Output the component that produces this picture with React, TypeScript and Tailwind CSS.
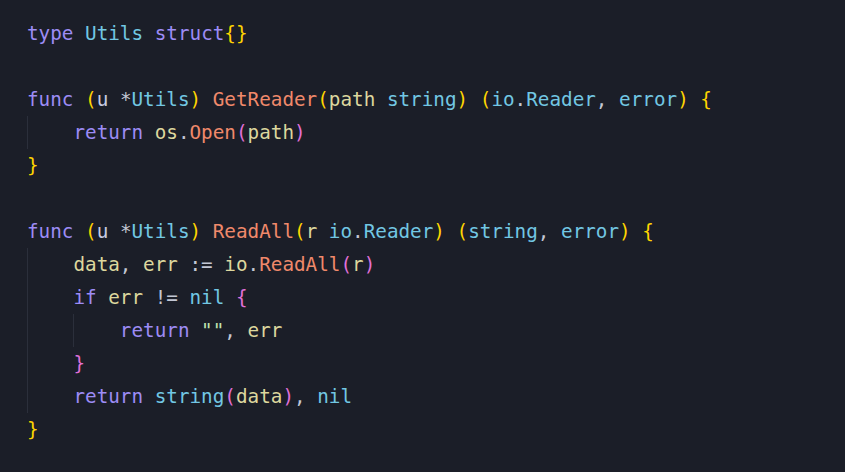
type Tok = [string, string];

const K = 'text-[#9d8cf5]'; // keyword
const T = 'text-[#72c7e3]'; // type / builtin
const F = 'text-[#f0896b]'; // function name
const V = 'text-[#ddd79e]'; // variable
const P = 'text-[#c3c7d4]'; // punctuation
const B1 = 'text-[#ffd500]'; // bracket level 1
const B2 = 'text-[#e070d8]'; // bracket level 2
const S = 'text-[#bfe3b0]'; // string
const R = 'text-[#c8cde3]'; // receiver

const lines: { indent: number; toks: Tok[] }[] = [
  { indent: 0, toks: [['type', K], [' ', P], ['Utils', T], [' ', P], ['struct', K], ['{}', B1]] },
  { indent: 0, toks: [] },
  {
    indent: 0,
    toks: [
      ['func', K], [' ', P], ['(', B1], ['u', R], [' ', P], ['*', P], ['Utils', T], [')', B1], [' ', P],
      ['GetReader', F], ['(', B1], ['path', V], [' ', P], ['string', T], [')', B1], [' ', P],
      ['(', B1], ['io', T], ['.', P], ['Reader', T], [',', P], [' ', P], ['error', T], [')', B1], [' ', P], ['{', B1],
    ],
  },
  { indent: 1, toks: [['return', K], [' ', P], ['os', V], ['.', P], ['Open', F], ['(', B2], ['path', V], [')', B2]] },
  { indent: 0, toks: [['}', B1]] },
  { indent: 0, toks: [] },
  {
    indent: 0,
    toks: [
      ['func', K], [' ', P], ['(', B1], ['u', R], [' ', P], ['*', P], ['Utils', T], [')', B1], [' ', P],
      ['ReadAll', F], ['(', B1], ['r', V], [' ', P], ['io', T], ['.', P], ['Reader', T], [')', B1], [' ', P],
      ['(', B1], ['string', T], [',', P], [' ', P], ['error', T], [')', B1], [' ', P], ['{', B1],
    ],
  },
  {
    indent: 1,
    toks: [
      ['data', V], [',', P], [' ', P], ['err', V], [' := ', P], ['io', V], ['.', P], ['ReadAll', F],
      ['(', B2], ['r', V], [')', B2],
    ],
  },
  { indent: 1, toks: [['if', K], [' ', P], ['err', V], [' != ', P], ['nil', T], [' ', P], ['{', B2]] },
  { indent: 2, toks: [['return', K], [' ', P], ['""', S], [',', P], [' ', P], ['err', V]] },
  { indent: 1, toks: [['}', B2]] },
  {
    indent: 1,
    toks: [['return', K], [' ', P], ['string', T], ['(', B2], ['data', V], [')', B2], [',', P], [' ', P], ['nil', T]],
  },
  { indent: 0, toks: [['}', B1]] },
];

export default function App() {
  return (
    <div
      className="w-[845px] h-[472px] bg-[#1b1e28] pl-[27px] pt-[17px] overflow-hidden"
      style={{ fontFamily: '"DejaVu Sans Mono", "Liberation Mono", monospace' }}
    >
      <pre className="text-[19.3px] leading-[33px] font-[inherit]">
        {lines.map((line, i) => (
          <div key={i} className="flex h-[33px] whitespace-pre">
            {Array.from({ length: line.indent }).map((_, j) => (
              <span key={j} className="inline-block w-[4ch] h-[33px] border-l border-[#2b2f3b]" />
            ))}
            {line.toks.map(([text, cls], j) => (
              <span key={j} className={cls}>
                {text}
              </span>
            ))}
          </div>
        ))}
      </pre>
    </div>
  );
}
